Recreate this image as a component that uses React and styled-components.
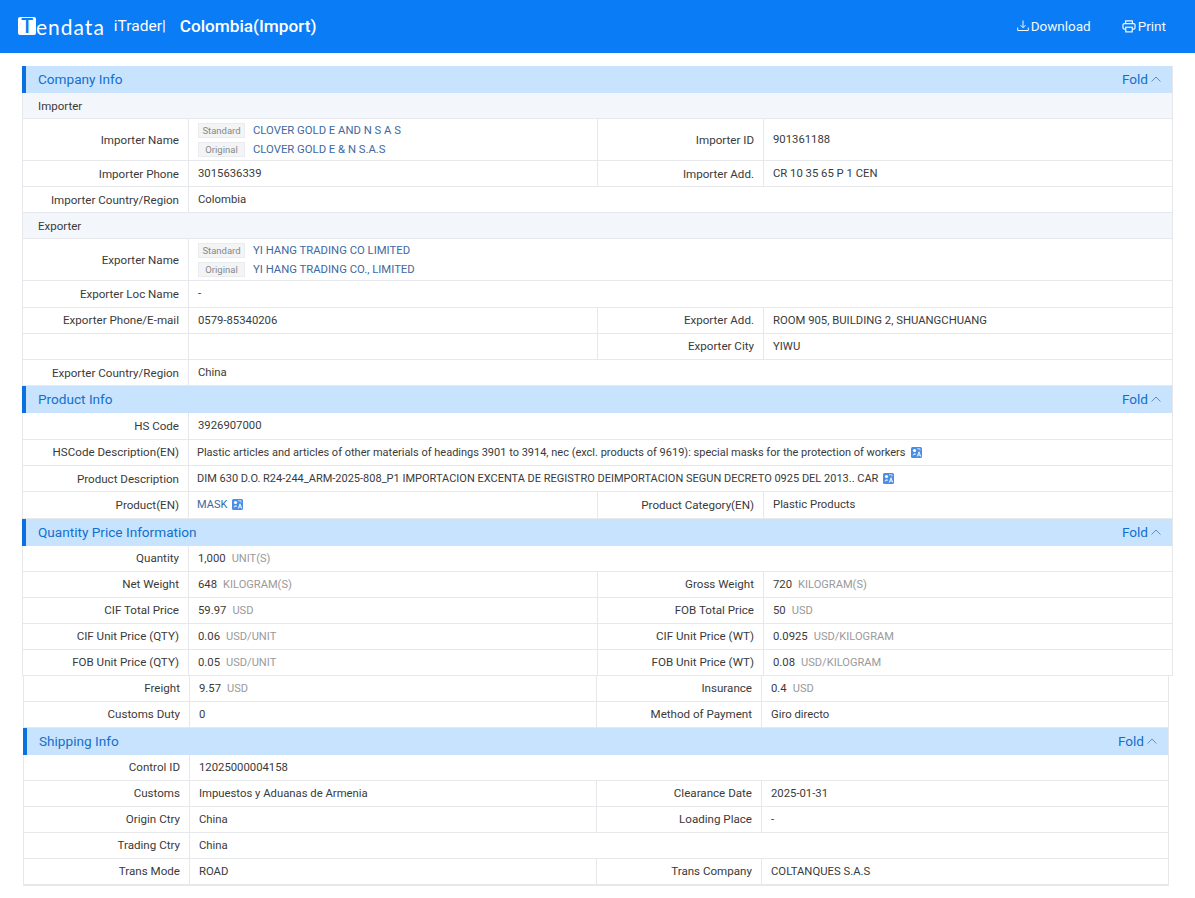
import React from "react";
import styled, { createGlobalStyle } from "styled-components";

const GlobalStyle = createGlobalStyle`
  html, body {
    margin: 0;
    background: #fff;
    font-family: Roboto, "Noto Sans", sans-serif;
  }
  * { box-sizing: border-box; }
`;

const companyRows = [
  { sub: "Importer" },
  {
    h: 42,
    cells: [
      { label: "Importer Name", names: ["CLOVER GOLD E AND N S A S", "CLOVER GOLD E & N S.A.S"] },
      { label: "Importer ID", value: "901361188" },
    ],
  },
  {
    cells: [
      { label: "Importer Phone", value: "3015636339" },
      { label: "Importer Add.", value: "CR 10 35 65 P 1 CEN" },
    ],
  },
  { cells: [{ label: "Importer Country/Region", value: "Colombia" }] },
  { sub: "Exporter" },
  {
    h: 42,
    cells: [{ label: "Exporter Name", names: ["YI HANG TRADING CO LIMITED", "YI HANG TRADING CO., LIMITED"] }],
  },
  { cells: [{ label: "Exporter Loc Name", value: "-" }] },
  {
    cells: [
      { label: "Exporter Phone/E-mail", value: "0579-85340206" },
      { label: "Exporter Add.", value: "ROOM 905, BUILDING 2, SHUANGCHUANG" },
    ],
  },
  {
    cells: [
      { label: "", value: "" },
      { label: "Exporter City", value: "YIWU" },
    ],
  },
  { cells: [{ label: "Exporter Country/Region", value: "China" }] },
];

const productRows = [
  { cells: [{ label: "HS Code", value: "3926907000" }] },
  {
    cells: [
      {
        label: "HSCode Description(EN)",
        value: "Plastic articles and articles of other materials of headings 3901 to 3914, nec (excl. products of 9619): special masks for the protection of workers",
        translate: true,
        tight: true,
      },
    ],
  },
  {
    cells: [
      {
        label: "Product Description",
        value: "DIM 630 D.O. R24-244_ARM-2025-808_P1 IMPORTACION EXCENTA DE REGISTRO DEIMPORTACION SEGUN DECRETO 0925 DEL 2013.. CAR",
        translate: true,
        tight: true,
      },
    ],
  },
  {
    cells: [
      { label: "Product(EN)", value: "MASK", link: true, translate: true, tight: true },
      { label: "Product Category(EN)", value: "Plastic Products" },
    ],
  },
];

const quantityRows = [
  { cells: [{ label: "Quantity", value: "1,000", unit: "UNIT(S)" }] },
  {
    cells: [
      { label: "Net Weight", value: "648", unit: "KILOGRAM(S)" },
      { label: "Gross Weight", value: "720", unit: "KILOGRAM(S)" },
    ],
  },
  {
    cells: [
      { label: "CIF Total Price", value: "59.97", unit: "USD" },
      { label: "FOB Total Price", value: "50", unit: "USD" },
    ],
  },
  {
    cells: [
      { label: "CIF Unit Price (QTY)", value: "0.06", unit: "USD/UNIT" },
      { label: "CIF Unit Price (WT)", value: "0.0925", unit: "USD/KILOGRAM" },
    ],
  },
  {
    cells: [
      { label: "FOB Unit Price (QTY)", value: "0.05", unit: "USD/UNIT" },
      { label: "FOB Unit Price (WT)", value: "0.08", unit: "USD/KILOGRAM" },
    ],
  },
];

const freightRows = [
  {
    cells: [
      { label: "Freight", value: "9.57", unit: "USD" },
      { label: "Insurance", value: "0.4", unit: "USD" },
    ],
  },
  {
    cells: [
      { label: "Customs Duty", value: "0" },
      { label: "Method of Payment", value: "Giro directo" },
    ],
  },
];

const shippingRows = [
  { cells: [{ label: "Control ID", value: "12025000004158" }] },
  {
    cells: [
      { label: "Customs", value: "Impuestos y Aduanas de Armenia" },
      { label: "Clearance Date", value: "2025-01-31" },
    ],
  },
  {
    cells: [
      { label: "Origin Ctry", value: "China" },
      { label: "Loading Place", value: "-" },
    ],
  },
  { cells: [{ label: "Trading Ctry", value: "China" }] },
  {
    cells: [
      { label: "Trans Mode", value: "ROAD" },
      { label: "Trans Company", value: "COLTANQUES S.A.S" },
    ],
  },
];

function DownloadIcon() {
  return (
    <svg width="12" height="12" viewBox="0 0 12 12" fill="none" stroke="#fff" strokeWidth="1">
      <path d="M6 0.5V7.500M3.500 5.200L6 7.700L8.500 5.200M0.700 7.500V10.500H11.300V7.500" />
    </svg>
  );
}

function PrintIcon() {
  return (
    <svg width="14" height="13" viewBox="0 0 15 14" fill="none" stroke="#fff" strokeWidth="1.300">
      <path d="M3.800 3.800V1H11.200V3.800" />
      <rect x="1" y="3.800" width="13" height="6" rx="1.500" />
      <rect x="4" y="7.800" width="7" height="5" fill="#0a7cf5" />
    </svg>
  );
}

function ChevronUp() {
  return (
    <svg width="10" height="6" viewBox="0 0 10 6" fill="none" stroke="#5f8fc0" strokeWidth="1">
      <path d="M0.600 5.500L5 1L9.400 5.500" />
    </svg>
  );
}

function TranslateIcon() {
  return (
    <svg width="11" height="11" viewBox="0 0 11 11">
      <rect width="11" height="11" rx="1.500" fill="#4a8de6" />
      <circle cx="3.500" cy="3.500" r="1.600" fill="#fff" />
      <path d="M1.500 8.500C2 6.700 3.200 6.200 4.300 6.200L5 7.500Z" fill="#fff" opacity="0.800" />
      <path d="M6.300 9.500L8 4.800L9.700 9.500M7 8H9" fill="none" stroke="#fff" strokeWidth="0.900" />
      <path d="M6 1.800H9V3.500" fill="none" stroke="#fff" strokeWidth="0.700" />
    </svg>
  );
}

function Cell({ cell, wide }) {
  return (
    <>
      <Label>{cell.label}</Label>
      <Value $wide={wide} $tight={cell.tight}>
        {cell.names ? (
          <NameList>
            {cell.names.map((name, i) => (
              <NameLine key={name}>
                <Tag>{i === 0 ? "Standard" : "Original"}</Tag>
                <CompanyLink>{name}</CompanyLink>
              </NameLine>
            ))}
          </NameList>
        ) : (
          <>
            {cell.link ? <CompanyLink>{cell.value}</CompanyLink> : cell.value}
            {cell.unit && <Unit>{cell.unit}</Unit>}
            {cell.translate && <IconSlot><TranslateIcon /></IconSlot>}
          </>
        )}
      </Value>
    </>
  );
}

function Rows({ rows, h }) {
  return rows.map((row, i) =>
    row.sub ? (
      <SubHead key={i}>{row.sub}</SubHead>
    ) : (
      <Row key={i} $h={row.h || h}>
        {row.cells.map((cell, j) => (
          <Cell key={j} cell={cell} wide={row.cells.length === 1} />
        ))}
      </Row>
    )
  );
}

function SectionHead({ title }) {
  return (
    <Head>
      <HeadTitle>{title}</HeadTitle>
      <Fold>
        Fold <ChevronUp />
      </Fold>
    </Head>
  );
}

export default function App() {
  return (
    <>
      <GlobalStyle />
      <TopBar>
        <Brand>
          <LogoMark>T</LogoMark>
          <LogoText>endata</LogoText>
          <Product>iTrader|</Product>
          <Country>Colombia(Import)</Country>
        </Brand>
        <Actions>
          <Action>
            <DownloadIcon />
            Download
          </Action>
          <Action>
            <PrintIcon />
            Print
          </Action>
        </Actions>
      </TopBar>
      <Main>
        <Table>
          <SectionHead title="Company Info" />
          <Rows rows={companyRows} />
          <SectionHead title="Product Info" />
          <Rows rows={productRows} h={26.4} />
          <SectionHead title="Quantity Price Information" />
          <Rows rows={quantityRows} h={26} />
        </Table>
        <LowerTable>
          <Rows rows={freightRows} h={26} />
          <SectionHead title="Shipping Info" />
          <Rows rows={shippingRows} h={26} />
        </LowerTable>
      </Main>
    </>
  );
}

const TopBar = styled.header`
  display: flex;
  justify-content: space-between;
  align-items: center;
  height: 53px;
  padding: 0 29px 1px 18px;
  background: #0a7cf5;
  color: #fff;
`;
const Brand = styled.div`
  display: flex;
  align-items: center;
`;
const LogoMark = styled.span`
  display: flex;
  align-items: center;
  justify-content: center;
  width: 18px;
  height: 18px;
  border-radius: 2px;
  background: #fff;
  color: #0a7cf5;
  font-size: 20px;
  font-weight: 500;
  line-height: 1;
`;
const LogoText = styled.span`
  font-family: "Lato", sans-serif;
  font-size: 21px;
  line-height: 1;
  letter-spacing: 1px;
`;
const Product = styled.span`
  margin-left: 9px;
  font-size: 15.500px;
`;
const Country = styled.span`
  margin-left: 14px;
  font-size: 17.200px;
  font-weight: 500;
`;
const Actions = styled.div`
  display: flex;
  gap: 31px;
`;
const Action = styled.span`
  display: flex;
  align-items: center;
  gap: 2px;
  font-size: 13.500px;
  opacity: 0.95;
`;
const Main = styled.main`
  padding-top: 13px;
`;
const Table = styled.section`
  --col1: 166px;
  --col2: 409px;
  --col3: 166px;
  width: 1151px;
  margin-left: 22px;
  border-left: 1px solid #e6e8eb;
  border-right: 1px solid #e6e8eb;
`;
const LowerTable = styled(Table)`
  --col1: 166px;
  --col2: 407px;
  --col3: 165px;
  width: 1146px;
  margin-left: 23px;
  border-bottom: 1px solid #e6e8eb;
`;
const Head = styled.div`
  display: flex;
  justify-content: space-between;
  align-items: center;
  height: 27px;
  margin-left: -1px;
  padding: 0 11px 1px 12px;
  border-left: 4px solid #0a72e0;
  background: #c8e3fd;
`;
const HeadTitle = styled.h2`
  margin: 0;
  color: #1170cf;
  font-size: 13.600px;
  font-weight: 400;
`;
const Fold = styled.span`
  display: flex;
  align-items: center;
  gap: 3px;
  color: #1170cf;
  font-size: 13.600px;
`;
const SubHead = styled.div`
  display: flex;
  align-items: center;
  height: 26px;
  padding-left: 15px;
  border-bottom: 1px solid #e6e8eb;
  background: #f3f6fa;
  color: #3a3a3a;
  font-size: 11.500px;
`;
const Row = styled.div`
  display: grid;
  grid-template-columns: var(--col1) var(--col2) var(--col3) 1fr;
  height: ${(p) => p.$h || 26.2}px;
  border-bottom: 1px solid #e6e8eb;
  font-size: 11.300px;
  color: #3a3a3a;
`;
const Label = styled.div`
  display: flex;
  align-items: center;
  justify-content: flex-end;
  padding-right: 9px;
  border-right: 1px solid #e6e8eb;
  font-size: 11.600px;
`;
const Value = styled.div`
  display: flex;
  align-items: center;
  grid-column: ${(p) => (p.$wide ? "2 / -1" : "auto")};
  padding-left: ${(p) => (p.$tight ? 8 : 9)}px;
  font-size: ${(p) => (p.$tight ? 11 : 11.3)}px;
  white-space: nowrap;
  &:nth-child(2):not(:last-child) {
    border-right: 1px solid #e6e8eb;
  }
`;
const Unit = styled.span`
  margin-left: 6px;
  color: #999;
  font-size: 11.100px;
`;
const IconSlot = styled.span`
  display: flex;
  margin-left: 5px;
`;
const NameList = styled.div`
  display: flex;
  flex-direction: column;
  gap: 4px;
`;
const NameLine = styled.div`
  display: flex;
  align-items: center;
`;
const Tag = styled.span`
  display: flex;
  align-items: center;
  justify-content: center;
  width: 47px;
  height: 15px;
  margin-right: 8px;
  background: #f3f4f6;
  border: 1px solid #eaebee;
  color: #888;
  font-size: 9.500px;
`;
const CompanyLink = styled.span`
  color: #40699f;
`;
